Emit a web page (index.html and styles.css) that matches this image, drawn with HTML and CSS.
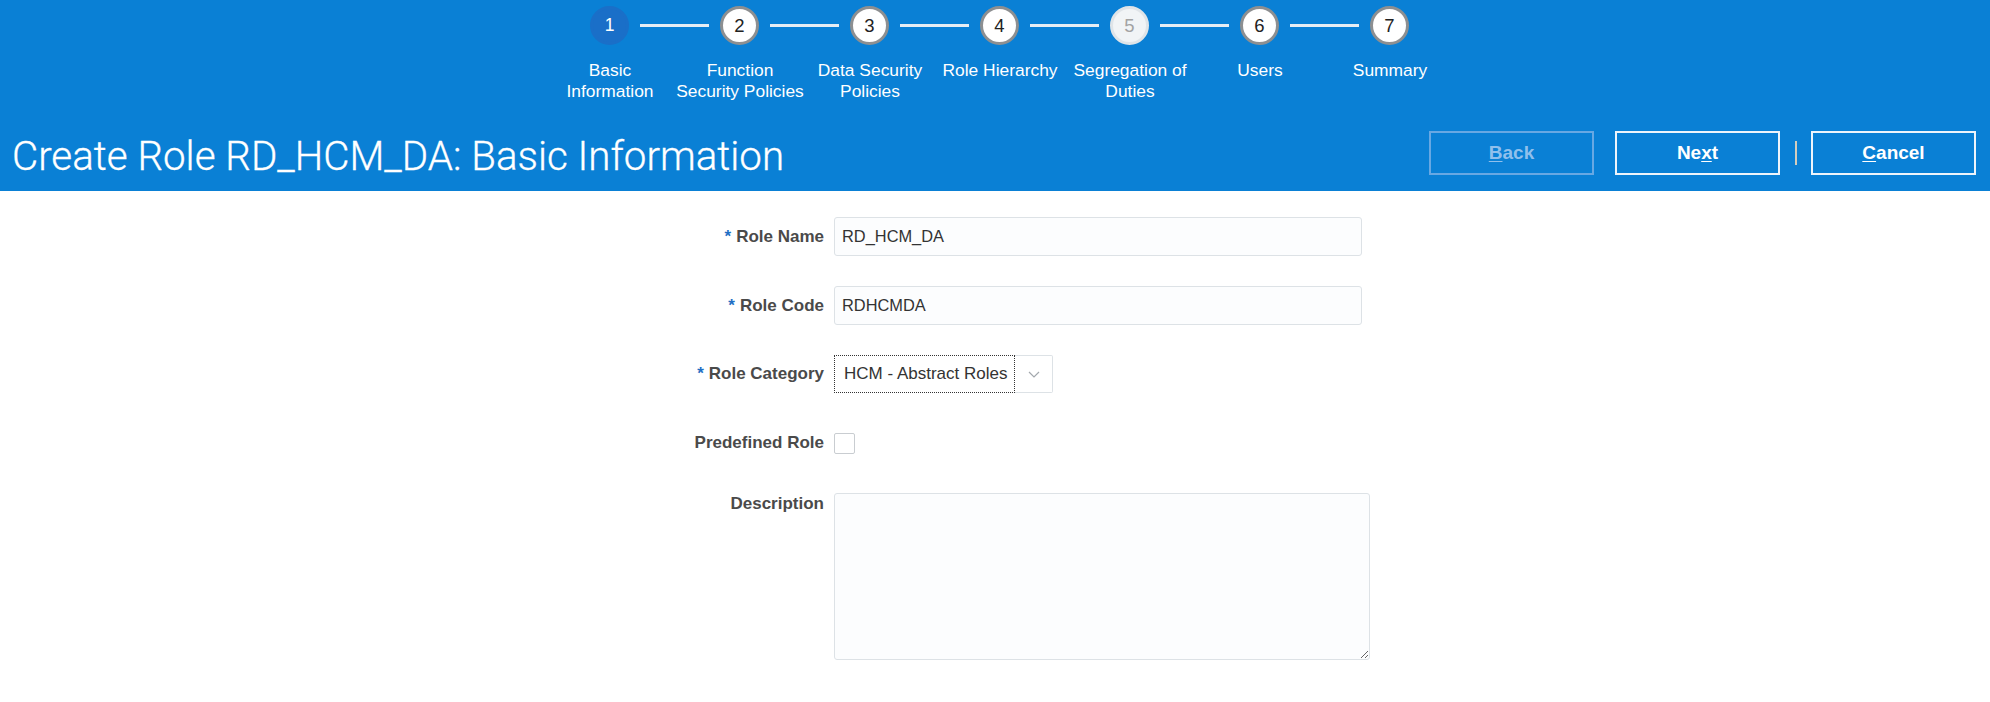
FILE: index.html
```html
<!DOCTYPE html>
<html lang="en">
<head>
<meta charset="utf-8">
<title>Create Role RD_HCM_DA: Basic Information</title>
<link rel="stylesheet" href="styles.css">
</head>
<body>
<header class="hdr">
  <div class="train">
    <div class="train-stops">
      <span class="stop stop-current">1</span><span class="link"></span>
      <span class="stop">2</span><span class="link"></span>
      <span class="stop">3</span><span class="link"></span>
      <span class="stop">4</span><span class="link"></span>
      <span class="stop stop-disabled">5</span><span class="link"></span>
      <span class="stop">6</span><span class="link"></span>
      <span class="stop">7</span>
    </div>
    <div class="train-labels">
      <span class="tlabel">Basic<br>Information</span>
      <span class="tlabel">Function<br>Security Policies</span>
      <span class="tlabel">Data Security<br>Policies</span>
      <span class="tlabel">Role Hierarchy</span>
      <span class="tlabel">Segregation of<br>Duties</span>
      <span class="tlabel">Users</span>
      <span class="tlabel">Summary</span>
    </div>
  </div>
  <div class="titlebar">
    <h1 class="title">Create Role RD_HCM_DA: Basic Information</h1>
    <div class="actions">
      <button class="btn btn-disabled" type="button"><u>B</u>ack</button>
      <button class="btn btn-next" type="button">Ne<u>x</u>t</button>
      <span class="sep"></span>
      <button class="btn" type="button"><u>C</u>ancel</button>
    </div>
  </div>
</header>
<main class="form">
  <label class="lbl lbl-tall"><span class="req">*</span>Role Name</label>
  <div class="cell"><input class="field" type="text" value="RD_HCM_DA"></div>

  <label class="lbl lbl-tall"><span class="req">*</span>Role Code</label>
  <div class="cell"><input class="field" type="text" value="RDHCMDA"></div>

  <label class="lbl lbl-sel"><span class="req">*</span>Role Category</label>
  <div class="cell">
    <div class="select">
      <span class="select-val">HCM - Abstract Roles</span>
      <span class="select-btn"><svg width="12" height="7" viewBox="0 0 12 7"><polyline points="1,1 6,6 11,1" fill="none" stroke="#a3a8ad" stroke-width="1.2"/></svg></span>
    </div>
  </div>

  <label class="lbl lbl-chk">Predefined Role</label>
  <div class="cell cell-chk"><span class="chk"></span></div>

  <label class="lbl lbl-desc">Description</label>
  <div class="cell"><textarea class="area"></textarea></div>
</main>
</body>
</html>
```

FILE: styles.css
```css
html, body {
  margin: 0;
  padding: 0;
  background: #ffffff;
}
body {
  font-family: "Liberation Sans", Arial, sans-serif;
}

/* ---------- header ---------- */
.hdr {
  background: #0a80d5;
  height: 191px;
  display: flex;
  flex-direction: column;
}
.train {
  padding-left: 545px;
  padding-top: 6px;
}
.train-stops {
  display: flex;
  align-items: center;
  padding-left: 45px;
  height: 39px;
}
.stop {
  width: 39px;
  height: 39px;
  box-sizing: border-box;
  border-radius: 50%;
  border: 3px solid #8d8f91;
  background: #ffffff;
  color: #222222;
  font-size: 18.5px;
  display: flex;
  align-items: center;
  justify-content: center;
  flex: none;
}
.stop-current {
  background: #1a6fc8;
  border-color: #1a6fc8;
  color: #ffffff;
  font-size: 17.5px;
}
.stop-disabled {
  background: #f1f4f6;
  border-color: #dfe4e8;
  color: #a3a3a3;
}
.link {
  width: 69px;
  height: 3px;
  margin: 0 11px;
  background: #e6edf4;
  flex: none;
}
.train-labels {
  display: flex;
  margin-top: 15px;
}
.tlabel {
  width: 130px;
  flex: none;
  text-align: center;
  color: #ffffff;
  font-size: 17.4px;
  line-height: 21px;
  white-space: nowrap;
}
.titlebar {
  display: flex;
  align-items: flex-start;
  justify-content: space-between;
  padding: 29px 14px 0 12px;
}
.title {
  margin: 4px 0 0;
  font-family: Roboto, "Liberation Sans", sans-serif;
  font-weight: 300;
  font-size: 40.3px;
  line-height: 44px;
  color: #ffffff;
  white-space: nowrap;
  -webkit-text-stroke: 0.3px #ffffff;
}
.actions {
  display: flex;
  align-items: center;
}
.btn {
  width: 165px;
  height: 44px;
  box-sizing: border-box;
  border: 2px solid #eef4fb;
  background: transparent;
  color: #ffffff;
  font-family: "Liberation Sans", Arial, sans-serif;
  font-weight: bold;
  font-size: 19px;
  padding: 0;
  margin: 0;
}
.btn u {
  text-underline-offset: 2px;
}
.btn-disabled {
  color: #90c0ec;
  border-color: #68a8e3;
}
.btn-next {
  margin-left: 21px;
}
.sep {
  width: 2px;
  height: 24px;
  background: #d3cdbd;
  margin: 0 14px 0 15px;
}

/* ---------- form ---------- */
.form {
  display: grid;
  grid-template-columns: 824px 536px;
  column-gap: 10px;
  row-gap: 30px;
  padding-top: 26px;
  align-items: start;
}
.lbl {
  text-align: right;
  font-weight: bold;
  font-size: 17px;
  color: #4a4a4a;
  white-space: nowrap;
}
.lbl-tall { line-height: 39px; }
.lbl-sel { line-height: 38px; }
.lbl-chk { line-height: 40px; }
.lbl-desc { line-height: 21px; }
.req {
  color: #1f6fc4;
  margin-right: 5px;
}
.cell {
  display: flex;
}
.cell-chk {
  height: 40px;
  align-items: center;
}
.field {
  width: 528px;
  height: 39px;
  box-sizing: border-box;
  border: 1px solid #dde2e6;
  border-radius: 3px;
  background: #fcfdfe;
  padding: 0 7px;
  font-family: "Liberation Sans", Arial, sans-serif;
  font-size: 16.4px;
  color: #333333;
  margin: 0;
}
.select {
  display: flex;
  height: 38px;
}
.select-val {
  width: 181px;
  box-sizing: border-box;
  border: 1px dotted #333333;
  background: #ffffff;
  padding-left: 9px;
  font-size: 17px;
  line-height: 36px;
  color: #333333;
  white-space: nowrap;
}
.select-btn {
  width: 38px;
  box-sizing: border-box;
  border: 1px solid #dde2e6;
  border-left: none;
  border-radius: 0 2px 2px 0;
  background: #ffffff;
  display: flex;
  align-items: center;
  justify-content: center;
}
.chk {
  width: 21px;
  height: 21px;
  box-sizing: border-box;
  border: 1px solid #c9cdd1;
  border-radius: 2px;
  background: #ffffff;
}
.area {
  width: 536px;
  height: 167px;
  box-sizing: border-box;
  border: 1px solid #dde2e6;
  border-radius: 3px;
  background: #fcfdfe;
  margin: 0;
  resize: both;
  font-family: "Liberation Sans", Arial, sans-serif;
  font-size: 16px;
}
```
